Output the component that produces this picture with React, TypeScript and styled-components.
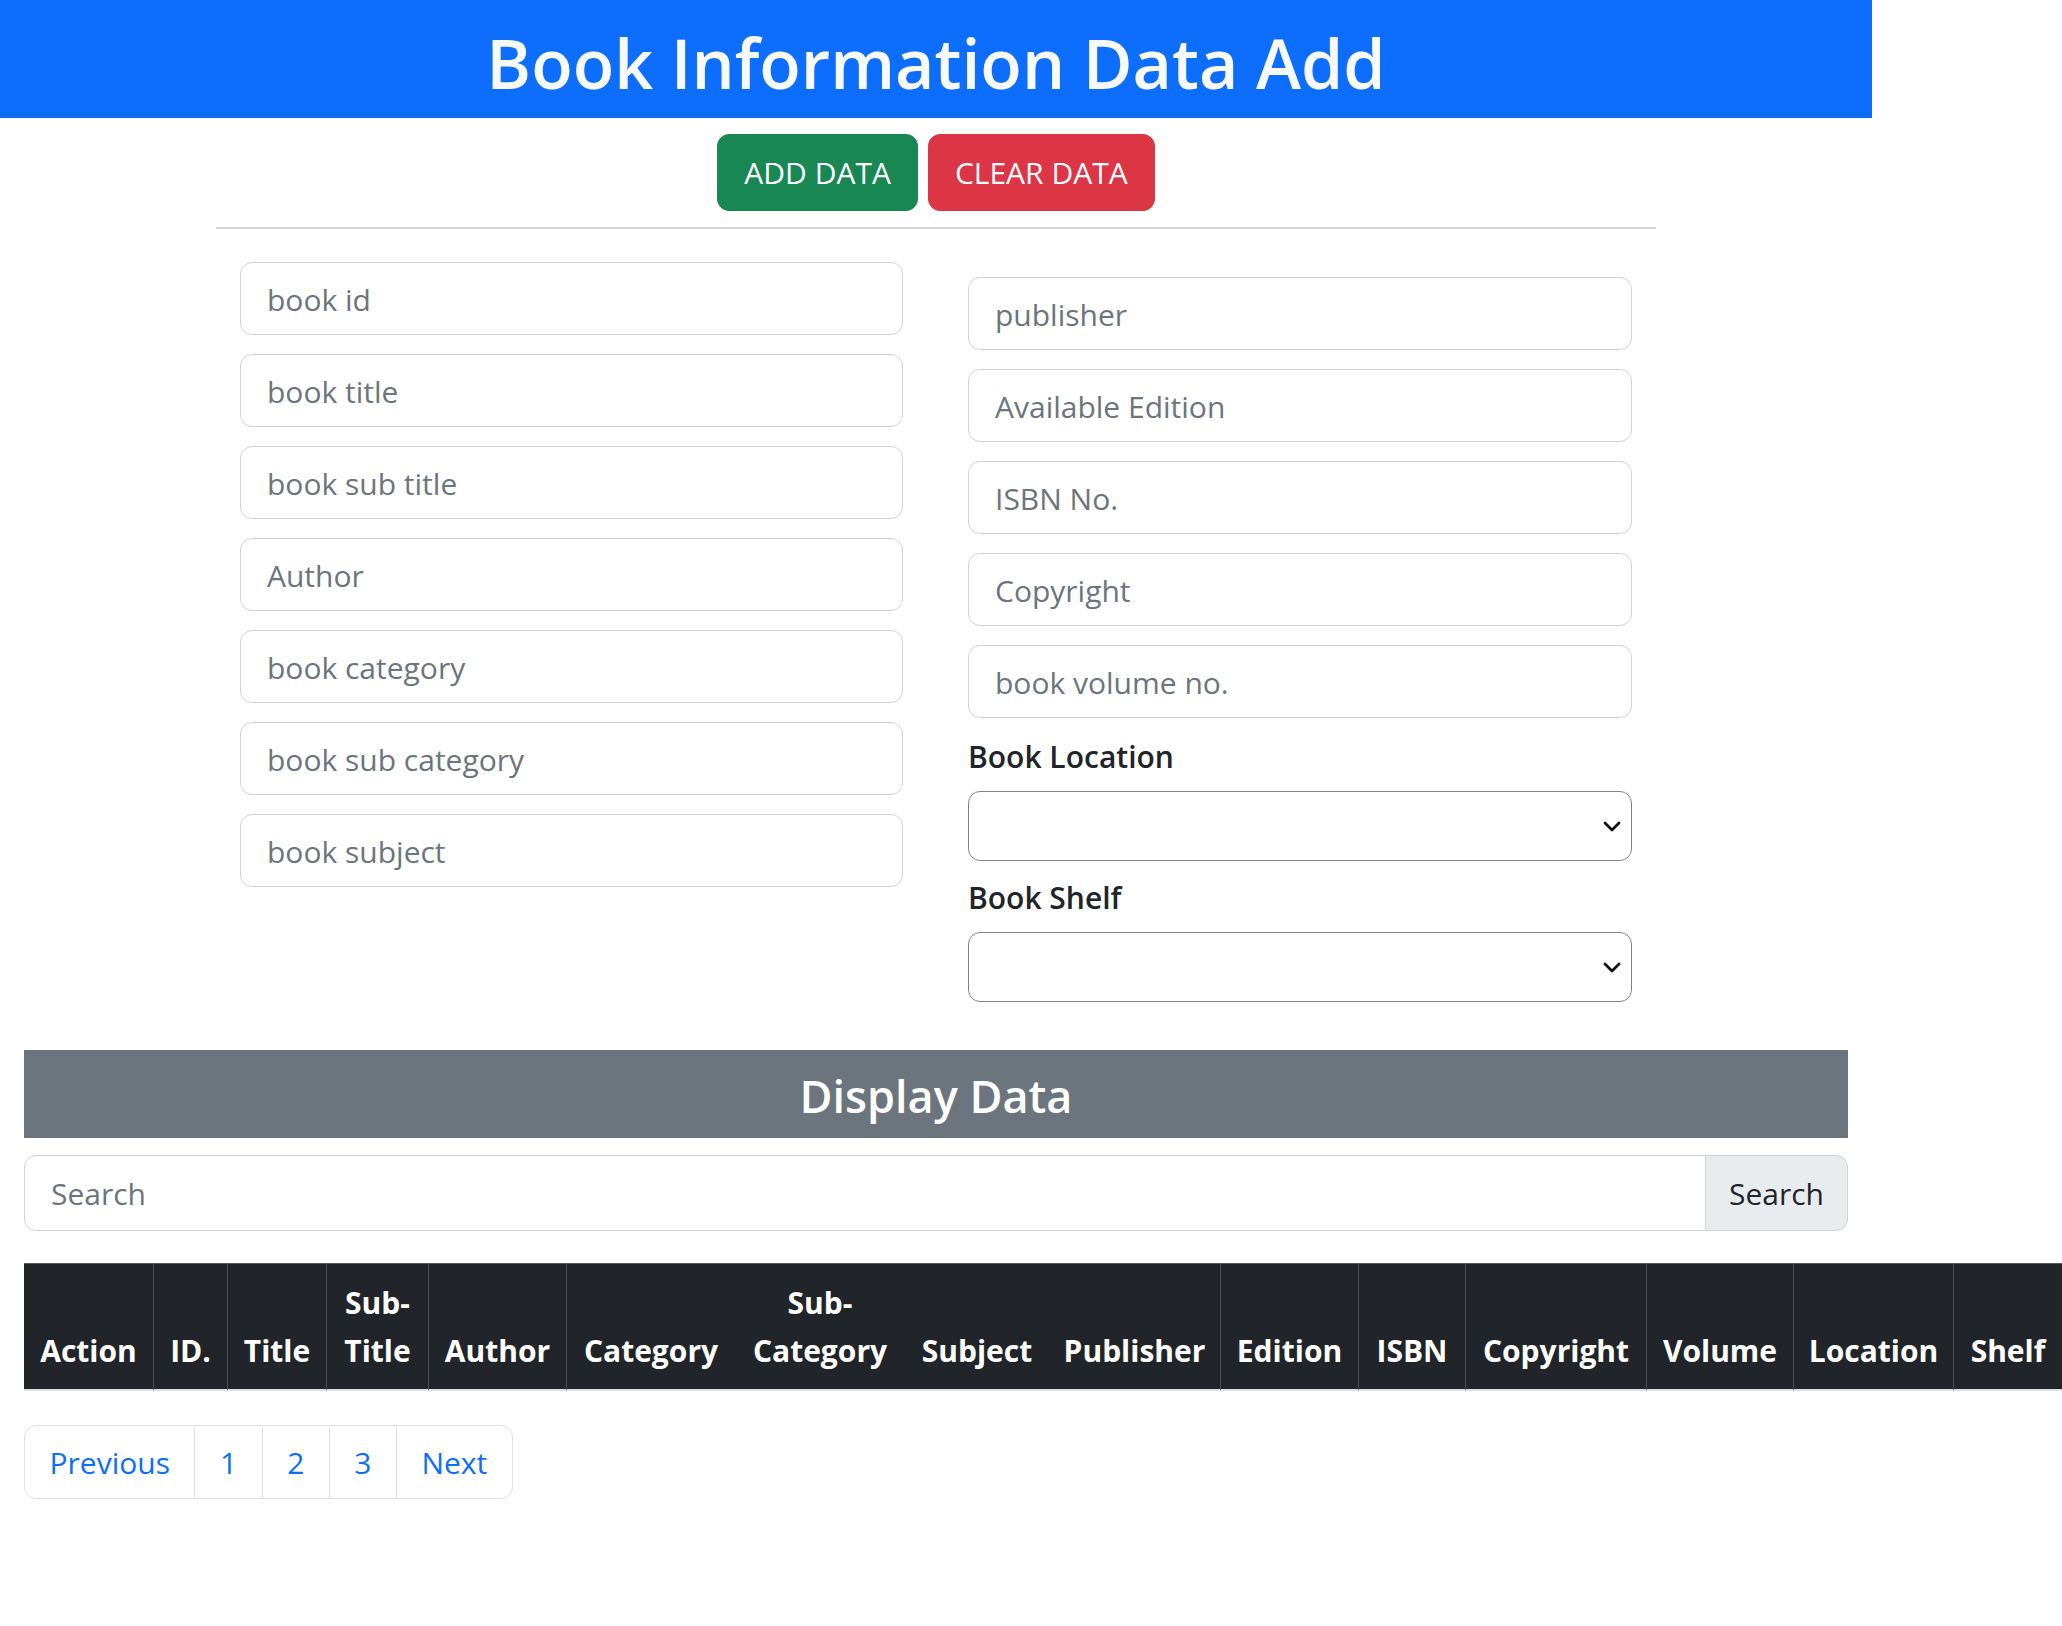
import styled, { createGlobalStyle } from "styled-components";

const GlobalStyle = createGlobalStyle`
  * {
    box-sizing: border-box;
  }
  html, body {
    margin: 0;
    padding: 0;
    background: #fff;
  }
  body {
    font-family: "Open Sans", "Noto Sans", "Liberation Sans", sans-serif;
    color: #212529;
    overflow-x: hidden;
  }
`;

const Page = styled.div`
    width: 1872px;
    padding-bottom: 60px;
`;

const Header = styled.header`
    height: 118px;
    background: #0d6efd;
    padding-top: 21px;
    text-align: center;
`;

const Title = styled.h1`
    margin: 0;
    font-size: 68px;
    line-height: 84px;
    font-weight: 600;
    color: #f8f9fa;
`;

const ButtonRow = styled.div`
    display: flex;
    justify-content: center;
    gap: 10px;
    margin-top: 16px;
`;

const ActionButton = styled.button<{ $tone: "success" | "danger" }>`
    height: 77px;
    padding: 0 26px;
    border: 1px solid ${(p) => (p.$tone === "success" ? "#198754" : "#dc3545")};
    background: ${(p) => (p.$tone === "success" ? "#198754" : "#dc3545")};
    color: #fff;
    font-family: inherit;
    font-size: 30px;
    line-height: 45px;
    border-radius: 12px;
    cursor: pointer;
`;

const Divider = styled.hr`
    width: 1440px;
    height: 2px;
    margin: 16px auto 0;
    border: 0;
    background: #d3d4d5;
`;

const FormGrid = styled.form`
    display: grid;
    grid-template-columns: 663px 664px;
    column-gap: 65px;
    justify-content: center;
    align-items: start;
    margin-top: 33px;
`;

const Column = styled.div<{ $offset?: number }>`
    display: flex;
    flex-direction: column;
    margin-top: ${(p) => p.$offset ?? 0}px;
`;

const TextInput = styled.input`
    height: 73px;
    margin-bottom: 19px;
    padding: 1px 26px 0;
    border: 1px solid #ced4da;
    border-radius: 12px;
    font-family: inherit;
    font-size: 30px;
    color: #212529;
    background: #fff;
    outline: none;
    &::placeholder {
        color: #6c757d;
    }
`;

const FieldLabel = styled.label`
    display: block;
    margin: 2px 0 16px;
    font-size: 30px;
    line-height: 36px;
    font-weight: 600;
    color: #212529;
`;

const SelectWrap = styled.div`
    position: relative;
    margin-bottom: 17px;
    &:last-child {
        margin-bottom: 0;
    }
    svg {
        position: absolute;
        right: 10px;
        top: 50%;
        transform: translateY(-50%);
        pointer-events: none;
    }
`;

const Select = styled.select`
    display: block;
    width: 100%;
    height: 70px;
    padding: 0 26px;
    border: 1px solid #858585;
    border-radius: 12px;
    background: #fff;
    appearance: none;
    font-family: inherit;
    font-size: 30px;
    color: #212529;
`;

const DisplayBar = styled.div`
    height: 88px;
    margin: 48px 24px 0;
    padding-top: 18px;
    background: #6c757d;
    text-align: center;
`;

const BarTitle = styled.h2`
    margin: 0;
    font-size: 45px;
    line-height: 55px;
    font-weight: 600;
    color: #fff;
`;

const SearchGroup = styled.div`
    display: flex;
    height: 76px;
    margin: 17px 24px 0;
`;

const SearchInput = styled.input`
    flex: 1;
    min-width: 0;
    padding: 0 26px;
    border: 1px solid #ced4da;
    border-radius: 12px 0 0 12px;
    font-family: inherit;
    font-size: 30px;
    color: #212529;
    outline: none;
    &::placeholder {
        color: #6c757d;
    }
`;

const SearchButton = styled.button`
    width: 143px;
    margin-left: -1px;
    border: 1px solid #ced4da;
    border-radius: 0 12px 12px 0;
    background: #e9ecef;
    font-family: inherit;
    font-size: 30px;
    color: #212529;
`;

const TableWrap = styled.div`
    margin: 32px 0 0 24px;
`;

const Table = styled.table`
    width: 2038px;
    border-collapse: separate;
    border-spacing: 0;
    table-layout: fixed;
`;

const HeadCell = styled.th<{ $divider?: boolean }>`
    padding: 15px 14px 14px;
    background: #212529;
    color: #fff;
    font-size: 30px;
    line-height: 48px;
    font-weight: 700;
    text-align: center;
    vertical-align: bottom;
    white-space: nowrap;
    border-top: 1px solid #50555a;
    border-bottom: 2px solid #dee2e6;
    border-left: ${(p) => (p.$divider ? "1px solid #4a4f54" : "none")};
`;

const Pagination = styled.ul`
    display: flex;
    margin: 34px 0 0 24px;
    padding: 0;
    list-style: none;
`;

const PageItem = styled.li`
    margin-left: -1px;
    &:first-child {
        margin-left: 0;
    }
    &:first-child a {
        border-radius: 12px 0 0 12px;
    }
    &:last-child a {
        border-radius: 0 12px 12px 0;
    }
`;

const PageLink = styled.a`
    display: flex;
    align-items: center;
    height: 74px;
    padding: 0 24.5px;
    border: 1px solid #dee2e6;
    background: #fff;
    color: #0d6efd;
    font-size: 30px;
    text-decoration: none;
    cursor: pointer;
`;

const leftFields = [
    "book id",
    "book title",
    "book sub title",
    "Author",
    "book category",
    "book sub category",
    "book subject",
];

const rightFields = [
    "publisher",
    "Available Edition",
    "ISBN No.",
    "Copyright",
    "book volume no.",
];

const columns: { label: React.ReactNode; width: number; divider?: boolean }[] = [
    { label: "Action", width: 129 },
    { label: "ID.", width: 74, divider: true },
    { label: "Title", width: 99, divider: true },
    { label: <>Sub-<br />Title</>, width: 102, divider: true },
    { label: "Author", width: 138, divider: true },
    { label: "Category", width: 169, divider: true },
    { label: <>Sub-<br />Category</>, width: 170 },
    { label: "Subject", width: 144 },
    { label: "Publisher", width: 171 },
    { label: "Edition", width: 138, divider: true },
    { label: "ISBN", width: 107, divider: true },
    { label: "Copyright", width: 181, divider: true },
    { label: "Volume", width: 147, divider: true },
    { label: "Location", width: 160, divider: true },
    { label: "Shelf", width: 109, divider: true },
];

function Chevron() {
    return (
        <svg width="20" height="13" viewBox="0 0 20 13" fill="none">
            <path
                d="M3 3.5l7 7 7-7"
                stroke="#111"
                strokeWidth="2.8"
                strokeLinecap="round"
                strokeLinejoin="round"
            />
        </svg>
    );
}

function App() {
    return (
        <Page>
            <GlobalStyle />
            <Header>
                <Title>Book Information Data Add</Title>
            </Header>
            <ButtonRow>
                <ActionButton $tone="success">ADD DATA</ActionButton>
                <ActionButton $tone="danger">CLEAR DATA</ActionButton>
            </ButtonRow>
            <Divider />
            <FormGrid onSubmit={(e) => e.preventDefault()}>
                <Column>
                    {leftFields.map((f) => (
                        <TextInput key={f} placeholder={f} />
                    ))}
                </Column>
                <Column $offset={15}>
                    {rightFields.map((f) => (
                        <TextInput key={f} placeholder={f} />
                    ))}
                    <FieldLabel>Book Location</FieldLabel>
                    <SelectWrap>
                        <Select>
                            <option></option>
                        </Select>
                        <Chevron />
                    </SelectWrap>
                    <FieldLabel>Book Shelf</FieldLabel>
                    <SelectWrap>
                        <Select>
                            <option></option>
                        </Select>
                        <Chevron />
                    </SelectWrap>
                </Column>
            </FormGrid>
            <DisplayBar>
                <BarTitle>Display Data</BarTitle>
            </DisplayBar>
            <SearchGroup>
                <SearchInput placeholder="Search" />
                <SearchButton>Search</SearchButton>
            </SearchGroup>
            <TableWrap>
                <Table>
                    <colgroup>
                        {columns.map((c, i) => (
                            <col key={i} style={{ width: c.width }} />
                        ))}
                    </colgroup>
                    <thead>
                        <tr>
                            {columns.map((c, i) => (
                                <HeadCell key={i} $divider={c.divider}>
                                    {c.label}
                                </HeadCell>
                            ))}
                        </tr>
                    </thead>
                </Table>
            </TableWrap>
            <Pagination>
                {["Previous", "1", "2", "3", "Next"].map((p) => (
                    <PageItem key={p}>
                        <PageLink>{p}</PageLink>
                    </PageItem>
                ))}
            </Pagination>
        </Page>
    );
}

export default App;
